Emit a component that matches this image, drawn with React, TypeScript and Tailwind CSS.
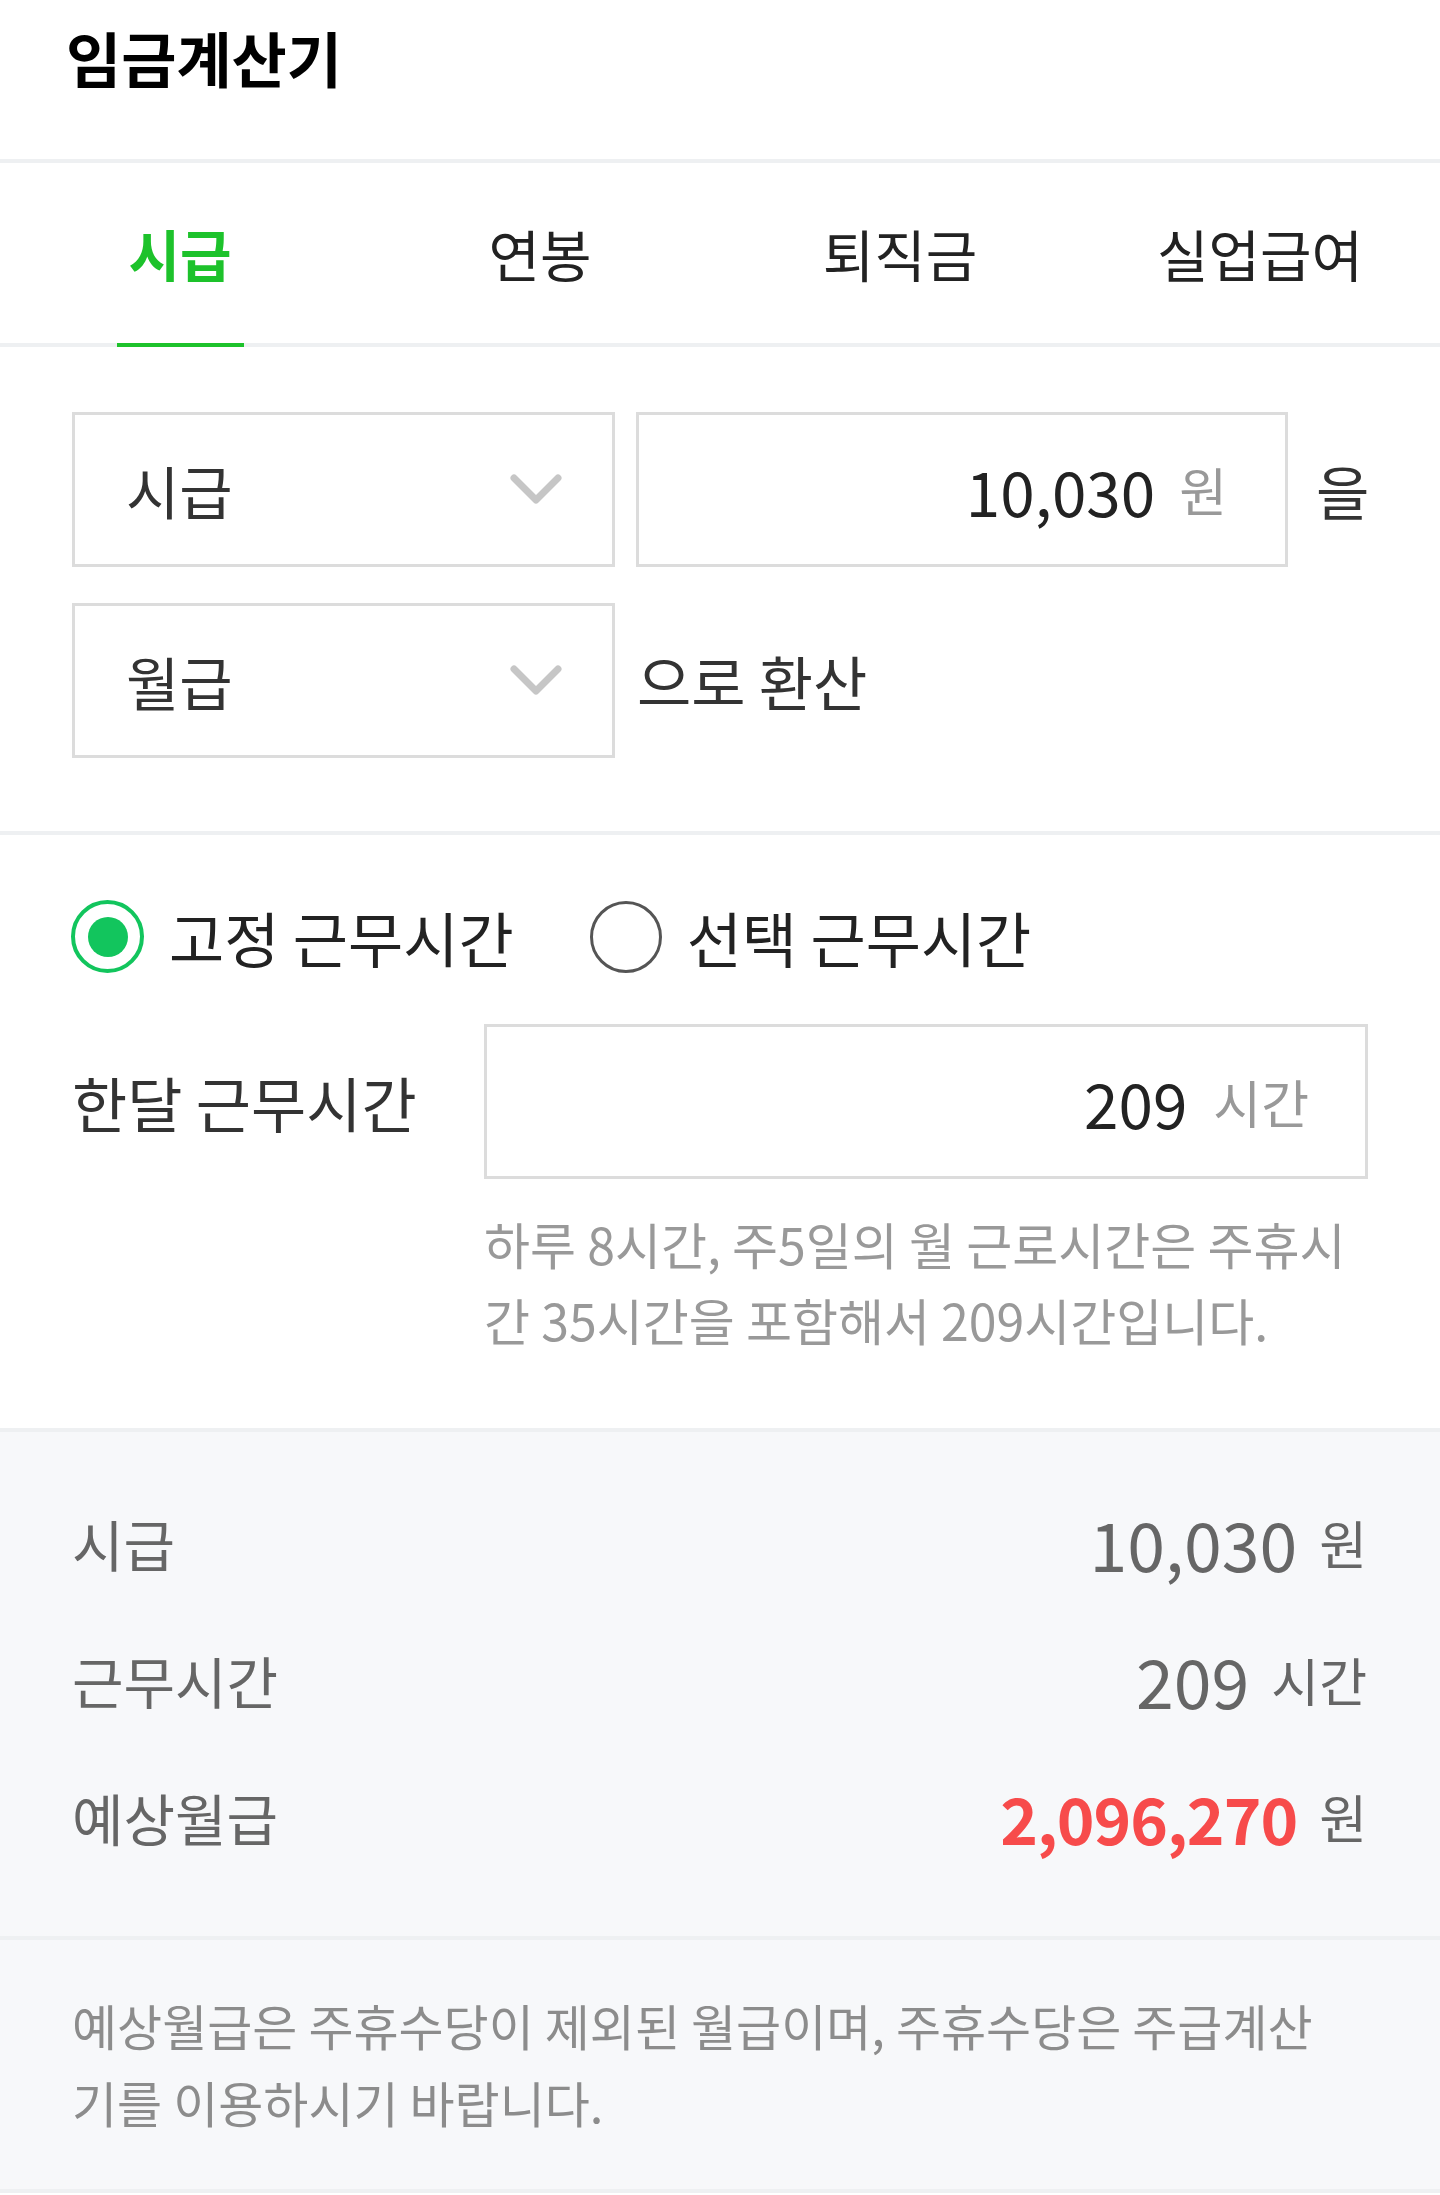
import React from "react";

const KR = { fontFamily: '"Noto Sans CJK KR", "Noto Sans", sans-serif' };

function Chevron() {
  return (
    <svg width="52" height="31" viewBox="0 0 52 31" fill="none">
      <polyline points="4,4 26,26 48,4" stroke="#c6c6c6" strokeWidth="7" strokeLinecap="round" strokeLinejoin="round" />
    </svg>
  );
}

function SelectBox({ label }: { label: string }) {
  return (
    <div className="w-[543px] h-[155px] border-[3px] border-[#dcdcdc] flex items-center justify-between pl-[51px] pr-[50px]">
      <span className="text-[58px] leading-none text-[#333]">{label}</span>
      <Chevron />
    </div>
  );
}

function Radio({ checked, label }: { checked: boolean; label: string }) {
  return (
    <div className="flex items-center">
      {checked ? (
        <div className="w-[73px] h-[73px] rounded-full border-[4px] border-[#12c55d] flex items-center justify-center">
          <div className="w-[40px] h-[40px] rounded-full bg-[#12c55d]" />
        </div>
      ) : (
        <div className="w-[72px] h-[72px] rounded-full border-[3px] border-[#555]" />
      )}
      <span className="ml-[25px] text-[60px] leading-none text-[#222]">{label}</span>
    </div>
  );
}

export default function App() {
  const tabs = ["시급", "연봉", "퇴직금", "실업급여"];

  return (
    <div className="w-full min-h-[2195px] bg-white" style={KR}>
      {/* header */}
      <div className="h-[159px] px-[66px]">
        <div className="h-[114px] flex items-center">
          <h1 className="text-[60px] leading-none font-bold text-black">임금계산기</h1>
        </div>
      </div>

      {/* tabs */}
      <div className="flex h-[188px] border-y-4 border-[#eef0f2]">
        {tabs.map((t, i) => (
          <div key={t} className="flex-1 relative flex items-center justify-center">
            <span
              className={
                i === 0
                  ? "text-[56px] leading-none font-bold text-[#1dc22b]"
                  : "text-[56px] leading-none text-[#222]"
              }
            >
              {t}
            </span>
            {i === 0 && <div className="absolute bottom-[-4px] w-[127px] h-[4px] bg-[#1dc22b]" />}
          </div>
        ))}
      </div>

      {/* conversion form */}
      <div className="pt-[65px] pb-[73px] pl-[72px] flex flex-col gap-[36px]">
        <div className="flex items-center">
          <SelectBox label="시급" />
          <div className="ml-[21px] w-[652px] h-[155px] border-[3px] border-[#dcdcdc] flex items-center justify-end pr-[58px]">
            <span className="text-[62px] leading-none text-[#222]">10,030</span>
            <span className="ml-[24px] text-[52px] leading-none text-[#999]">원</span>
          </div>
          <span className="ml-[28px] text-[58px] leading-none text-[#333]">을</span>
        </div>
        <div className="flex items-center">
          <SelectBox label="월급" />
          <span className="ml-[22px] text-[59px] leading-none text-[#333]">으로 환산</span>
        </div>
      </div>

      {/* work hours */}
      <div className="border-t-4 border-[#eef0f2] pt-[65px] pb-[71px] pl-[71px] pr-[72px]">
        <div className="flex items-center gap-[76px]">
          <Radio checked label="고정 근무시간" />
          <Radio checked={false} label="선택 근무시간" />
        </div>
        <div className="mt-[51px] flex">
          <div className="w-[413px] h-[155px] flex items-center pl-[1px]">
            <span className="text-[60px] leading-none text-[#333]">한달 근무시간</span>
          </div>
          <div className="flex-1">
            <div className="h-[155px] border-[3px] border-[#dcdcdc] flex items-center justify-end pr-[56px]">
              <span className="text-[62px] leading-none text-[#222]">209</span>
              <span className="ml-[26px] text-[52px] leading-none text-[#999]">시간</span>
            </div>
            <p className="mt-[26px] text-[50px] leading-[76px] text-[#999]">
              하루 8시간, 주5일의 월 근로시간은 주휴시
              <br />간 35시간을 포함해서 209시간입니다.
            </p>
          </div>
        </div>
      </div>

      {/* results */}
      <div className="border-t-4 border-[#eef0f2] bg-[#f7f8fa] pt-[42px] pb-[51px] pl-[72px] pr-[73px]">
        <div className="h-[137px] flex items-center justify-between">
          <span className="text-[56px] leading-none text-[#666]">시급</span>
          <div className="flex items-center">
            <span className="text-[68px] leading-none text-[#666]">10,030</span>
            <span className="ml-[22px] text-[52px] leading-none text-[#666]">원</span>
          </div>
        </div>
        <div className="h-[137px] flex items-center justify-between">
          <span className="text-[56px] leading-none text-[#666]">근무시간</span>
          <div className="flex items-center">
            <span className="text-[68px] leading-none text-[#666]">209</span>
            <span className="ml-[22px] text-[52px] leading-none text-[#666]">시간</span>
          </div>
        </div>
        <div className="h-[137px] flex items-center justify-between">
          <span className="text-[56px] leading-none text-[#666]">예상월급</span>
          <div className="flex items-center">
            <span className="text-[64px] leading-none font-bold tracking-[-1px] text-[#f74b4b]">2,096,270</span>
            <span className="ml-[22px] text-[52px] leading-none text-[#666]">원</span>
          </div>
        </div>
      </div>

      {/* note */}
      <div className="border-y-4 border-[#eef0f2] bg-[#f7f8fa] pt-[46px] pb-[49px] pl-[72px] pr-[40px]">
        <p className="text-[49px] leading-[77px] text-[#8c8c8c]">
          예상월급은 주휴수당이 제외된 월급이며, 주휴수당은 주급계산
          <br />기를 이용하시기 바랍니다.
        </p>
      </div>
    </div>
  );
}
